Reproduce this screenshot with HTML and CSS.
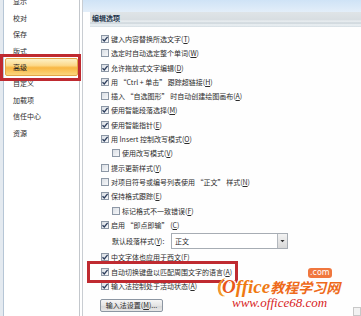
FILE: index.html
```html
<!DOCTYPE html>
<html lang="zh-CN">
<head>
<meta charset="utf-8">
<link rel="stylesheet" href="styles.css">
</head>
<body>
<div class="window">
  <aside class="nav">
    <ul class="nav-list">
      <li>显示</li>
      <li>校对</li>
      <li>保存</li>
      <li>版式</li>
      <li class="active">高级</li>
      <li>自定义</li>
      <li>加载项</li>
      <li>信任中心</li>
      <li>资源</li>
    </ul>
  </aside>
  <main class="content">
    <div class="topstrip"></div>
    <div class="section-head">编辑选项</div>
    <div class="options">
      <div class="row"><span class="cb on"><svg viewBox="0 0 8 8"><path d="M1.5 4.2 L3.3 6 L6.6 1.8"/></svg></span><span>键入内容替换所选文字(<u>T</u>)</span></div>
      <div class="row"><span class="cb"></span><span>选定时自动选定整个单词(<u>W</u>)</span></div>
      <div class="row"><span class="cb on"><svg viewBox="0 0 8 8"><path d="M1.5 4.2 L3.3 6 L6.6 1.8"/></svg></span><span>允许拖放式文字编辑(<u>D</u>)</span></div>
      <div class="row"><span class="cb on"><svg viewBox="0 0 8 8"><path d="M1.5 4.2 L3.3 6 L6.6 1.8"/></svg></span><span>用 “Ctrl + 单击” 跟踪超链接(<u>H</u>)</span></div>
      <div class="row"><span class="cb"></span><span>插入 “自选图形” 时自动创建绘图画布(<u>A</u>)</span></div>
      <div class="row"><span class="cb on"><svg viewBox="0 0 8 8"><path d="M1.5 4.2 L3.3 6 L6.6 1.8"/></svg></span><span>使用智能段落选择(<u>M</u>)</span></div>
      <div class="row"><span class="cb on"><svg viewBox="0 0 8 8"><path d="M1.5 4.2 L3.3 6 L6.6 1.8"/></svg></span><span>使用智能指针(<u>E</u>)</span></div>
      <div class="row"><span class="cb on"><svg viewBox="0 0 8 8"><path d="M1.5 4.2 L3.3 6 L6.6 1.8"/></svg></span><span>用 Insert 控制改写模式(<u>O</u>)</span></div>
      <div class="row indent"><span class="cb"></span><span>使用改写模式(<u>V</u>)</span></div>
      <div class="row"><span class="cb"></span><span>提示更新样式(<u>Y</u>)</span></div>
      <div class="row"><span class="cb"></span><span>对项目符号或编号列表使用 “正文” 样式(<u>N</u>)</span></div>
      <div class="row"><span class="cb on"><svg viewBox="0 0 8 8"><path d="M1.5 4.2 L3.3 6 L6.6 1.8"/></svg></span><span>保持格式跟踪(<u>E</u>)</span></div>
      <div class="row indent"><span class="cb"></span><span>标记格式不一致错误(<u>F</u>)</span></div>
      <div class="row"><span class="cb on"><svg viewBox="0 0 8 8"><path d="M1.5 4.2 L3.3 6 L6.6 1.8"/></svg></span><span>启用 “即点即输” (<u>C</u>)</span></div>
      <div class="row select-row"><span class="label">默认段落样式(<u>Y</u>):</span><div class="select"><span class="sel-text">正文</span><span class="sel-btn"><svg viewBox="0 0 6 4"><path d="M0.5 0.8 H5.5 L3 3.4 Z"/></svg></span></div></div>
      <div class="row"><span class="cb on"><svg viewBox="0 0 8 8"><path d="M1.5 4.2 L3.3 6 L6.6 1.8"/></svg></span><span>中文字体也应用于西文(<u>F</u>)</span></div>
      <div class="row"><span class="cb on"><svg viewBox="0 0 8 8"><path d="M1.5 4.2 L3.3 6 L6.6 1.8"/></svg></span><span>自动切换键盘以匹配周围文字的语言(<u>A</u>)</span></div>
      <div class="row"><span class="cb on"><svg viewBox="0 0 8 8"><path d="M1.5 4.2 L3.3 6 L6.6 1.8"/></svg></span><span>输入法控制处于活动状态(<u>A</u>)</span></div>
      <div class="btn-row"><span class="btn">输入法设置(<u>M</u>)...</span></div>
    </div>
  </main>
  <div class="mark mark-nav"></div>
  <div class="mark mark-opt"></div>
  <div class="logo">
    <svg class="logo-swoosh" viewBox="0 0 20 30"><path d="M14 2 C4 4 0 14 4 24 C6 28 10 29 13 28 C7 26 5 18 7 12 C9 6 12 3 14 2 Z"/></svg>
    <span class="logo-com">.com</span>
    <div class="logo-main"><span class="logo-o">O</span><span class="logo-ffice">ffice</span><span class="logo-cn">教程学习网</span></div>
    <div class="logo-url">www.office68.com</div>
  </div>
  <div class="grip"></div>
</div>
</body>
</html>
```

FILE: styles.css
```css
* { box-sizing: border-box; }
html, body {
  margin: 0;
  padding: 0;
  width: 361px;
  height: 316px;
  overflow: hidden;
  background: #ffffff;
}
body {
  font-family: "Noto Sans CJK SC", "Noto Sans", sans-serif;
  font-size: 7px;
  color: #2b2b2b;
}
u { text-decoration: underline; text-underline-offset: 1px; }

.window {
  position: relative;
  display: flex;
  width: 361px;
  height: 316px;
  background: linear-gradient(90deg, #e4eaf0 0, #e4eaf0 3px, #ffffff 3px);
}

/* left navigation */
.nav {
  margin-left: 3px;
  width: 77px;
  height: 100%;
  border-left: 1px solid #b6c6d6;
  border-right: 1px solid #c3c7cc;
  background: #ffffff;
}
.nav-list {
  list-style: none;
  margin: -6.6px 0 0 0;
  padding: 0;
}
.nav-list li {
  position: relative;
  height: 16.4px;
  line-height: 16.4px;
  padding-left: 8px;
  margin: 0 1px;
}
.nav-list li.active {
  z-index: 1;
  color: #222;
}
.nav-list li.active::before {
  content: "";
  position: absolute;
  left: 0;
  right: 0;
  top: -0.8px;
  bottom: -0.8px;
  border: 1px solid #e2a648;
  border-radius: 2px;
  background: linear-gradient(#fdf1c6 0%, #fcd98a 40%, #f8b743 55%, #fbd57c 100%);
  z-index: -1;
}

/* right content */
.content {
  margin-left: 2px;
  flex: 1;
  height: 100%;
  border-left: 1px solid #c9cdd2;
  background: #fefefe;
}
.topstrip {
  height: 12px;
  background: linear-gradient(#cfe3f6, #e3eef9);
}
.section-head {
  margin-left: 7px;
  height: 15px;
  line-height: 13px;
  padding-left: 2px;
  font-weight: bold;
  color: #27384e;
  background: linear-gradient(#dfe4e7 0%, #d8dee2 50%, #e9eef1 62%, #cbd4da 74%, #eef3f6 86%, #d3dce2 100%);
}
.options {
  padding-top: 4.85px;
}
.row {
  display: flex;
  align-items: center;
  height: 14.3px;
  padding-left: 18px;
  white-space: nowrap;
}
.row.indent { padding-left: 29px; }
.cb {
  flex: none;
  width: 8px;
  height: 8px;
  margin-right: 2px;
  border: 1px solid #8d98a6;
  background: linear-gradient(135deg, #d9dee4, #f7f8fa);
  display: flex;
}
.cb svg {
  width: 8px;
  height: 8px;
  margin: -1px;
}
.cb svg path {
  fill: none;
  stroke: #2c3d5c;
  stroke-width: 1.3;
}
.select-row {
  height: 18.3px;
  padding-left: 29px;
}
.select-row .label { width: 59px; }
.select {
  display: flex;
  width: 117px;
  height: 16px;
  border: 1px solid #a7adb4;
  background: #ffffff;
}
.sel-text {
  flex: 1;
  padding-left: 3px;
  line-height: 14px;
}
.sel-btn {
  width: 10px;
  height: 14px;
  border-left: 1px solid #b3b8be;
  background: linear-gradient(#f3f3f3, #d8d8d8);
  display: flex;
  align-items: center;
  justify-content: center;
}
.sel-btn svg { width: 5px; height: 4px; }
.sel-btn path { fill: #333; }

.btn-row {
  padding: 5.75px 0 0 17px;
}
.btn {
  display: inline-block;
  width: 63px;
  height: 13px;
  line-height: 11px;
  text-align: center;
  border: 1px solid #8c96a2;
  border-radius: 2px;
  background: linear-gradient(#f6f6f6, #e4e4e4 50%, #d6d6d6 51%, #e8e8e8);
}

/* red annotation boxes */
.mark {
  position: absolute;
  border: 3px solid #bf2a30;
}
.mark-nav {
  left: 0;
  top: 54px;
  width: 81px;
  height: 27px;
}
.mark-opt {
  left: 87px;
  top: 261px;
  width: 151px;
  height: 22px;
}

/* watermark logo */
.logo {
  position: absolute;
  left: 216px;
  top: 266px;
  width: 142px;
  height: 46px;
}
.logo-swoosh {
  position: absolute;
  left: 0;
  top: 8px;
  width: 14px;
  height: 26px;
}
.logo-swoosh path { fill: #f39a2a; }
.logo-com {
  position: absolute;
  left: 92px;
  top: 2px;
  padding: 0 2px;
  height: 10px;
  line-height: 10px;
  font-family: "DejaVu Sans", sans-serif;
  font-size: 8px;
  color: #fff;
  background: #f0773e;
  border-radius: 3px;
}
.logo-main {
  position: absolute;
  left: 6px;
  top: 12px;
  white-space: nowrap;
  line-height: 18px;
  text-shadow: 1px 1px 0 #fff, -1px -1px 0 #fff, 1px -1px 0 #fff, -1px 1px 0 #fff;
}
.logo-o, .logo-ffice {
  font-family: "Liberation Serif", serif;
  font-style: italic;
  font-weight: bold;
  font-size: 19px;
  color: #ef7a13;
}
.logo-o { color: #e8581a; }
.logo-cn {
  font-family: "Noto Sans CJK SC", sans-serif;
  font-weight: bold;
  font-style: italic;
  font-size: 14px;
  color: #ee6a1a;
}
.logo-url {
  position: absolute;
  left: 16px;
  top: 29px;
  font-family: "Liberation Serif", serif;
  font-style: italic;
  font-size: 13px;
  color: #d81e1e;
  white-space: nowrap;
  text-shadow: 1px 1px 0 #fff;
}
.grip {
  position: absolute;
  right: 0;
  bottom: 0;
  width: 8px;
  height: 9px;
  border: 1px solid #c8c8c8;
  background: #f2f2f2;
}
```
